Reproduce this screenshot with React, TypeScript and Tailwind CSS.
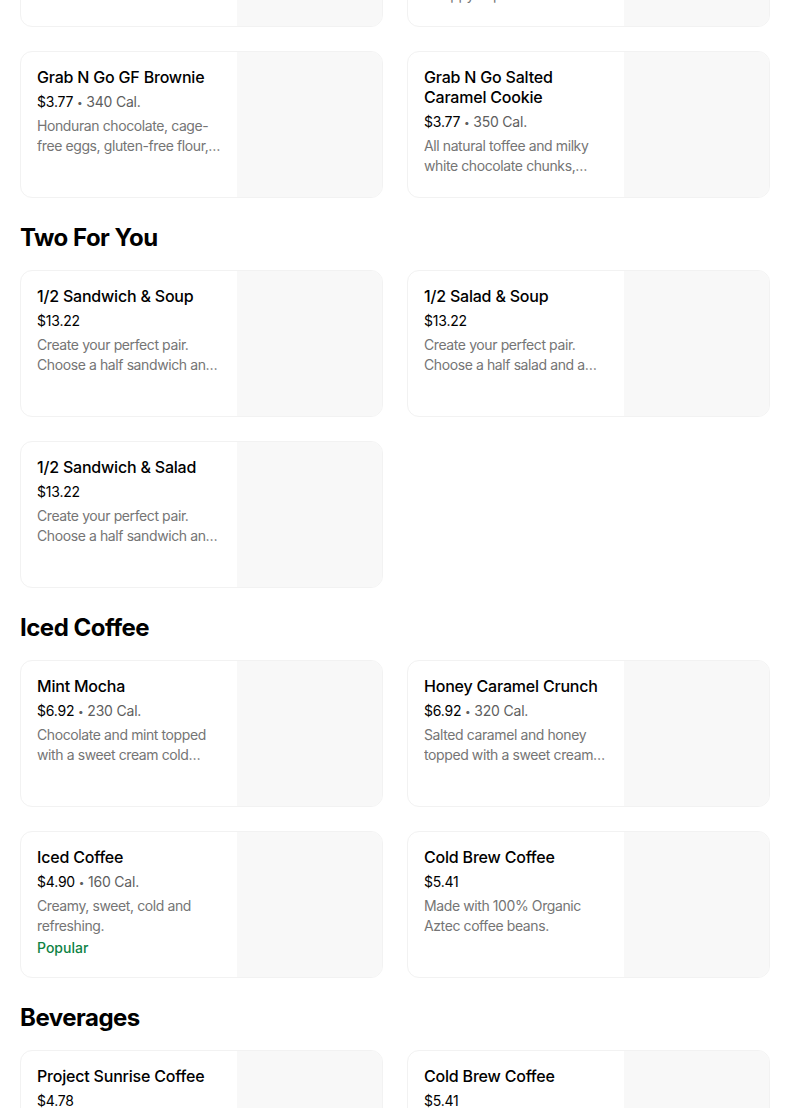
import React from 'react'

type Item = {
  title: string
  price: string
  cal?: string
  desc: string
  popular?: boolean
}

type Section = {
  name?: string
  items: Item[]
}

const sections: Section[] = [
  {
    items: [
      {
        title: 'Grab N Go Cookie',
        price: '$3.77',
        cal: '380 Cal.',
        desc: 'Semi-sweet chocolate chunks and cage-free eggs.',
      },
      {
        title: 'Grab N Go Kitchen Sink Cookie',
        price: '$3.77',
        cal: '330 Cal.',
        desc: 'The perfect sweet treat with a happy cup of coffee.',
      },
      {
        title: 'Grab N Go GF Brownie',
        price: '$3.77',
        cal: '340 Cal.',
        desc: 'Honduran chocolate, cage-free eggs, gluten-free flour, and more.',
      },
      {
        title: 'Grab N Go Salted Caramel Cookie',
        price: '$3.77',
        cal: '350 Cal.',
        desc: 'All natural toffee and milky white chocolate chunks, caramelized sugar and sea salt.',
      },
    ],
  },
  {
    name: 'Two For You',
    items: [
      {
        title: '1/2 Sandwich & Soup',
        price: '$13.22',
        desc: 'Create your perfect pair. Choose a half sandwich and a cup of soup.',
      },
      {
        title: '1/2 Salad & Soup',
        price: '$13.22',
        desc: 'Create your perfect pair. Choose a half salad and a cup of soup.',
      },
      {
        title: '1/2 Sandwich & Salad',
        price: '$13.22',
        desc: 'Create your perfect pair. Choose a half sandwich and a half salad.',
      },
    ],
  },
  {
    name: 'Iced Coffee',
    items: [
      {
        title: 'Mint Mocha',
        price: '$6.92',
        cal: '230 Cal.',
        desc: 'Chocolate and mint topped with a sweet cream cold foam.',
      },
      {
        title: 'Honey Caramel Crunch',
        price: '$6.92',
        cal: '320 Cal.',
        desc: 'Salted caramel and honey topped with a sweet cream cold foam.',
      },
      {
        title: 'Iced Coffee',
        price: '$4.90',
        cal: '160 Cal.',
        desc: 'Creamy, sweet, cold and refreshing.',
        popular: true,
      },
      {
        title: 'Cold Brew Coffee',
        price: '$5.41',
        desc: 'Made with 100% Organic Aztec coffee beans.',
      },
    ],
  },
  {
    name: 'Beverages',
    items: [
      {
        title: 'Project Sunrise Coffee',
        price: '$4.78',
        desc: 'Our signature light roast, brewed fresh all morning.',
      },
      {
        title: 'Cold Brew Coffee',
        price: '$5.41',
        desc: 'Made with 100% Organic Aztec coffee beans.',
      },
    ],
  },
]

function MenuCard({ item }: { item: Item }) {
  return (
    <div className="flex h-[147px] overflow-hidden rounded-xl border border-[#f2f2f2] bg-white">
      <div className="flex-1 min-w-0 pt-[15px] pb-4 pl-4 pr-4">
        <h3 className="line-clamp-2 text-base font-medium leading-5 tracking-[-0.2px] text-black">
          {item.title}
        </h3>
        <p className="mt-[5px] text-sm leading-5 tracking-[-0.2px] text-black">
          {item.price}
          {item.cal && (
            <span className="text-[#5e5e5e]">
              {' '}
              <span className="text-[10px] align-[1px]">•</span> {item.cal}
            </span>
          )}
        </p>
        <p className="mt-1 line-clamp-2 text-sm leading-5 tracking-[-0.4px] text-[#757575]">
          {item.desc}
        </p>
        {item.popular && (
          <p className="mt-0.5 text-sm font-medium leading-5 text-[#0e8345]">Popular</p>
        )}
      </div>
      <div className="w-[145px] shrink-0 bg-[#f8f8f8]" />
    </div>
  )
}

export default function App() {
  return (
    <div
      className="h-[1108px] overflow-hidden bg-white"
      style={{ fontFamily: 'Inter, "Noto Sans", sans-serif' }}
    >
      <div className="-mt-[120px] ml-5 w-[750px]">
        {sections.map((section, idx) => (
          <section key={idx} className={idx > 0 ? 'mt-6' : ''}>
            {section.name && (
              <h2 className="mb-4 text-2xl font-bold leading-8 tracking-[-0.5px] text-black">
                {section.name}
              </h2>
            )}
            <div className="grid grid-cols-2 gap-6">
              {section.items.map((item, i) => (
                <MenuCard key={i} item={item} />
              ))}
            </div>
          </section>
        ))}
      </div>
    </div>
  )
}
